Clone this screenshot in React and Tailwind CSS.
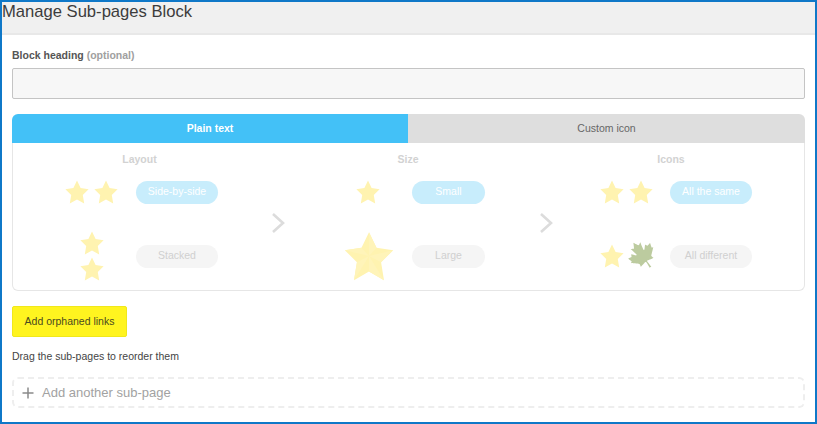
import React from "react";
import { FaCanadianMapleLeaf } from "react-icons/fa";

const STAR = "12,0.6 15.6,8 23.6,9.2 17.8,15 19.2,23.6 12,19.4 4.8,23.6 6.2,15 0.4,9.2 8.4,8";

function Star({ size = 24, faceted = false }) {
  return (
    <svg width={size} height={size} viewBox="0 0 24 24" className="block shrink-0">
      <polygon points={STAR} fill="#fff3b0" />
      {faceted && (
        <g fill="#fff4b9">
          <polygon points="12,0.6 15.6,8 12,12" />
          <polygon points="23.6,9.2 17.8,15 12,12" />
          <polygon points="19.2,23.6 12,19.4 12,12" />
          <polygon points="4.8,23.6 6.2,15 12,12" />
          <polygon points="0.4,9.2 8.4,8 12,12" />
        </g>
      )}
    </svg>
  );
}

function Chevron() {
  return (
    <svg width="14" height="22" viewBox="0 0 14 22" className="block">
      <path d="M2 2 L12 11 L2 20" fill="none" stroke="#dcdcdc" strokeWidth="2.6" />
    </svg>
  );
}

function Pill({ active, width, children }) {
  return (
    <div
      className={
        "h-[23px] rounded-full flex items-center justify-center text-[10.5px] shrink-0 " +
        width + " " +
        (active ? "bg-[#c8edfc] text-white" : "bg-[#f5f5f5] text-[#d0d0d0]")
      }
    >
      {children}
    </div>
  );
}

function Heading({ children }) {
  return <div className="text-center text-[10.5px] font-bold text-[#d2d2d2] leading-[14px]">{children}</div>;
}

export default function App() {
  return (
    <div
      className="w-[817px] h-[424px] border-2 border-[#0f78c8] bg-white overflow-hidden"
      style={{ fontFamily: '"Liberation Sans", Arial, sans-serif' }}
    >
      <div className="h-[33px] bg-[#f0f0f0] border-b-2 border-[#e8e8e8] text-[16.6px] leading-[20px] text-[#3c3c3c]">
        Manage Sub-pages Block
      </div>

      <div className="pl-[10px] pr-[10px]">
        <div className="mt-[14px] text-[10.5px] leading-[13px] font-bold text-[#555555]">
          Block heading <span className="text-[#a0a0a0]">(optional)</span>
        </div>
        <div className="mt-[6px] h-[31px] bg-[#f7f7f7] border border-[#c4c4c4] rounded-[2px]" />

        <div className="mt-[15px] flex h-[29px] text-[10.5px] font-bold rounded-t-[6px] overflow-hidden">
          <div className="w-[396px] bg-[#43c1f7] text-white flex items-center justify-center">Plain text</div>
          <div className="flex-1 bg-[#dedede] text-[#666666] font-normal flex items-center justify-center">Custom icon</div>
        </div>

        <div className="border border-t-0 border-[#e6e6e6] rounded-b-[6px] h-[148px] flex">
          <div className="w-[253px] pt-[9px]">
            <Heading>Layout</Heading>
            <div className="mt-[14px] h-[24px] flex items-center pl-[52px]">
              <div className="flex gap-[5px] w-[54px]"><Star /><Star /></div>
              <div className="ml-[17px]"><Pill active width="w-[82px]">Side-by-side</Pill></div>
            </div>
            <div className="mt-[27px] h-[50px] flex items-center pl-[52px]">
              <div className="flex flex-col gap-[2px] w-[54px] items-center"><Star /><Star /></div>
              <div className="ml-[17px]"><Pill width="w-[82px]">Stacked</Pill></div>
            </div>
          </div>

          <div className="w-[24px] flex items-center justify-center pt-[12px]"><Chevron /></div>

          <div className="w-[236px] pt-[9px]">
            <Heading>Size</Heading>
            <div className="mt-[14px] h-[24px] flex items-center pl-[66px]">
              <div className="w-[24px]"><Star /></div>
              <div className="ml-[32px]"><Pill active width="w-[73px]">Small</Pill></div>
            </div>
            <div className="mt-[27px] h-[50px] flex items-center pl-[54px]">
              <div className="w-[50px]"><Star size={50} faceted /></div>
              <div className="ml-[18px]"><Pill width="w-[73px]">Large</Pill></div>
            </div>
          </div>

          <div className="w-[8px]" />
          <div className="w-[24px] flex items-center justify-center pt-[12px]"><Chevron /></div>

          <div className="flex-1 pt-[9px]">
            <div className="w-[226px]"><Heading>Icons</Heading></div>
            <div className="mt-[14px] h-[24px] flex items-center pl-[42px]">
              <div className="flex gap-[5px] w-[53px]"><Star /><Star /></div>
              <div className="ml-[17px]"><Pill active width="w-[82px]">All the same</Pill></div>
            </div>
            <div className="mt-[27px] h-[50px] flex items-center pl-[42px]">
              <div className="flex gap-[3px] w-[53px] items-center">
                <Star />
                <FaCanadianMapleLeaf className="shrink-0 w-[30px] h-[30px] -mt-[2px] text-[#bccb9f] -rotate-[35deg]" />
              </div>
              <div className="ml-[17px]"><Pill width="w-[82px]">All different</Pill></div>
            </div>
          </div>
        </div>

        <div className="mt-[15px] w-[115px] h-[31px] bg-[#fff41f] border border-[#f0e81a] rounded-[2px] flex items-center justify-center text-[10.5px] text-[#4a4a20]">
          Add orphaned links
        </div>
        <div className="mt-[13px] text-[10.5px] leading-[13px] text-[#444444]">Drag the sub-pages to reorder them</div>

        <div className="mt-[14px] h-[31px] border-2 border-dashed border-[#eeeeee] rounded-[6px] flex items-center pl-[8px] text-[13px] text-[#a2a2a2]">
          <svg width="12" height="12" viewBox="0 0 12 12" className="block mr-[8px]">
            <path d="M6 0.5V11.5M0.5 6H11.5" stroke="#8a8a8a" strokeWidth="1.5" />
          </svg>
          Add another sub-page
        </div>
      </div>
    </div>
  );
}
